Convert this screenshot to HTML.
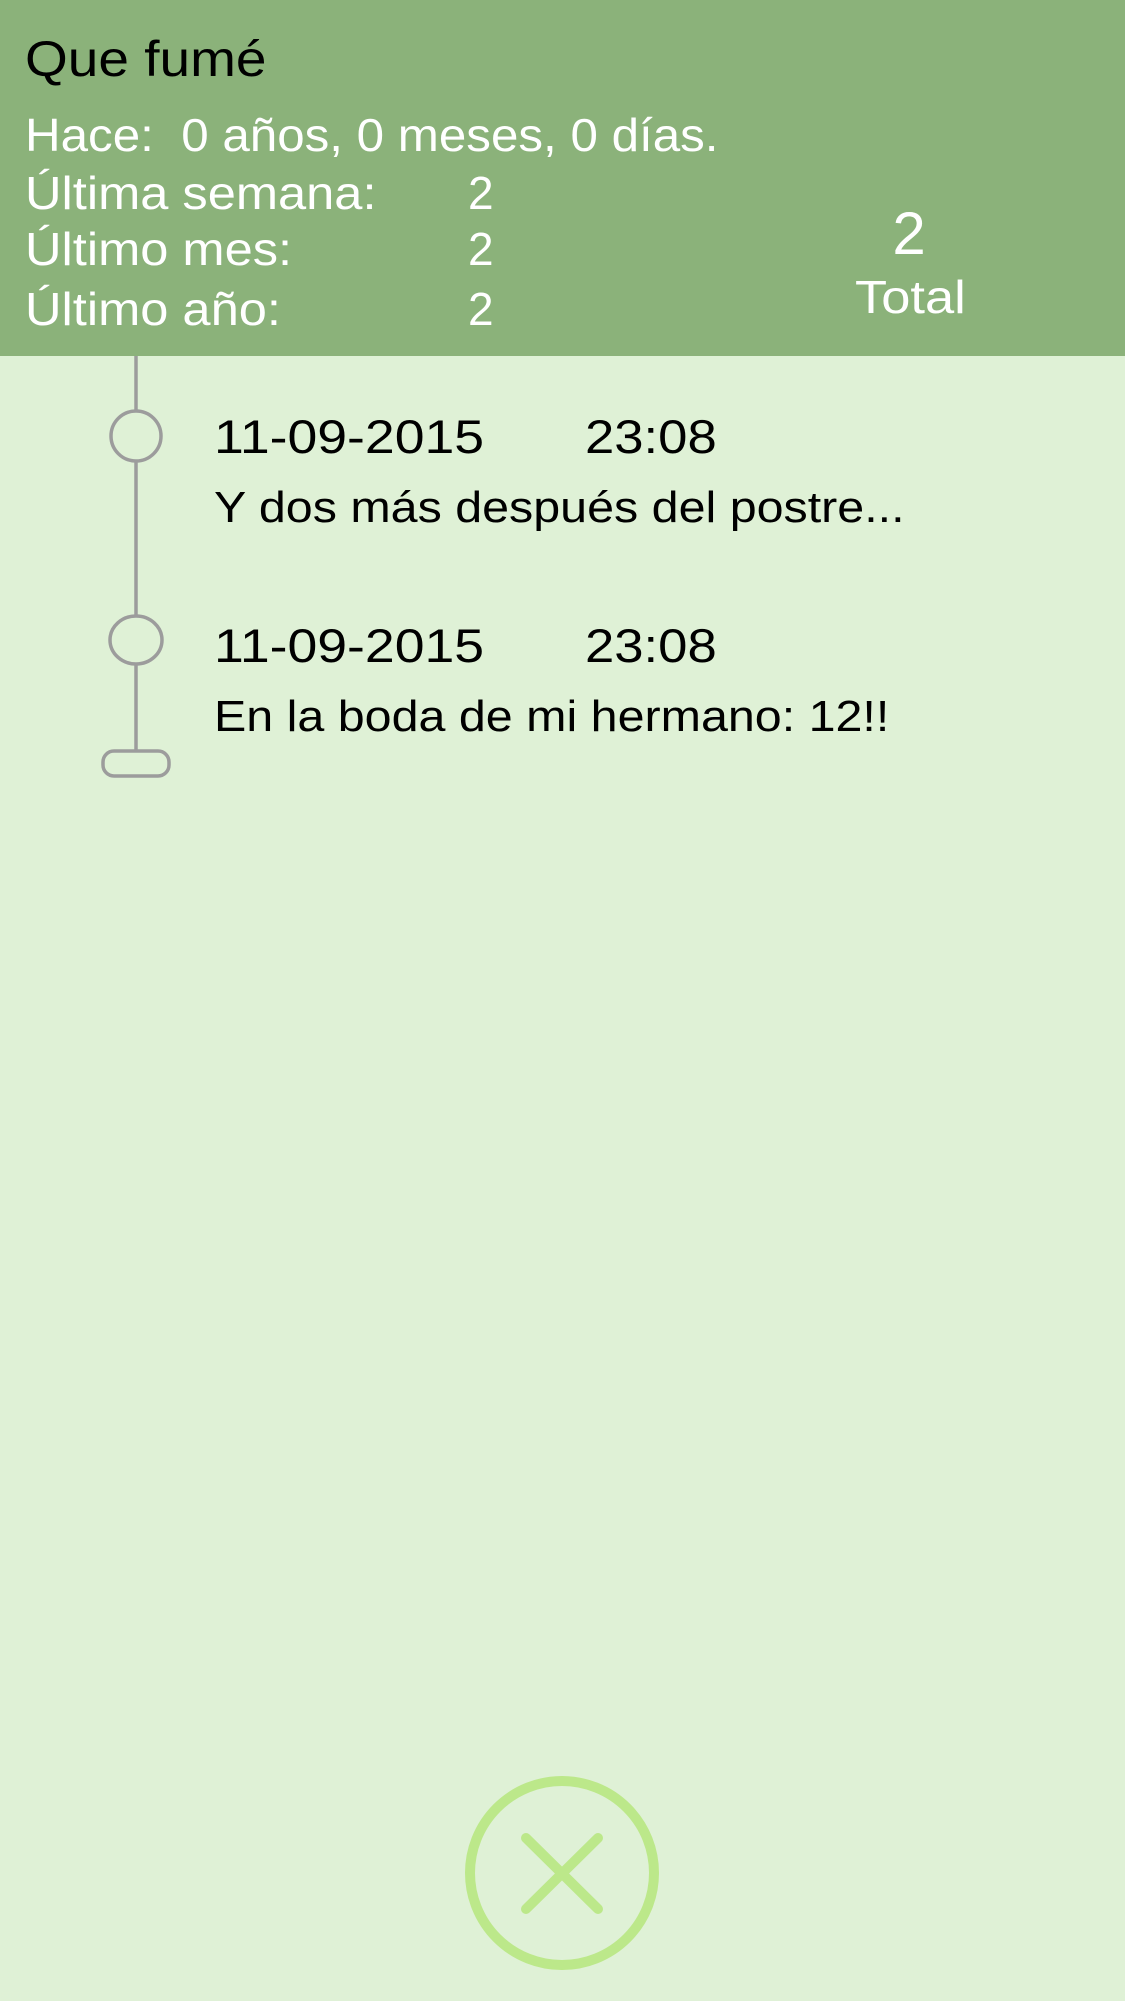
<!DOCTYPE html>
<html><head><meta charset="utf-8"><style>
html,body{margin:0;padding:0}
body{width:1125px;height:2001px;background:#dff1d6;position:relative;overflow:hidden;font-family:"Liberation Sans",sans-serif}
.hdr{position:absolute;left:0;top:0;width:1125px;height:356px;background:#8bb27a}
.t{position:absolute;white-space:nowrap;line-height:1;transform-origin:0 0}
.w{color:#fff}
.s{transform:scaleX(1.1)}
</style></head><body>
<div class="hdr"></div>
<div class="t" style="left:25px;top:34px;font-size:50px;color:#000;transform:scaleX(1.1)">Que fumé</div>
<div class="t w" style="left:25px;top:112px;font-size:46px;transform:scaleX(1.072)">Hace:&nbsp; 0 años, 0 meses, 0 días.</div>
<div class="t w s" style="left:25px;top:170px;font-size:46px">Última semana:</div>
<div class="t w s" style="left:25px;top:226px;font-size:46px">Último mes:</div>
<div class="t w s" style="left:25px;top:286px;font-size:46px">Último año:</div>
<div class="t w" style="left:468px;top:170px;font-size:46px">2</div>
<div class="t w" style="left:468px;top:226px;font-size:46px">2</div>
<div class="t w" style="left:468px;top:286px;font-size:46px">2</div>
<div class="t w" style="left:859px;top:204px;width:100px;text-align:center;font-size:60px">2</div>
<div class="t w" style="left:855px;top:274px;font-size:46px;transform:scaleX(1.14)">Total</div>

<svg style="position:absolute;left:0;top:0" width="1125" height="2001">
<g stroke="#9c9c9c" stroke-width="3.5" fill="none">
<line x1="136" y1="356" x2="136" y2="410"/>
<ellipse cx="136" cy="436" rx="25" ry="25"/>
<line x1="136" y1="461" x2="136" y2="615"/>
<ellipse cx="136" cy="640" rx="26" ry="24"/>
<line x1="136" y1="664" x2="136" y2="751"/>
<rect x="103" y="751" width="66" height="25" rx="11"/>
</g>
<g stroke="#bce88a" stroke-width="10" fill="none" stroke-linecap="round">
<circle cx="562" cy="1873" r="92"/>
<line x1="526" y1="1838" x2="598" y2="1909"/>
<line x1="598" y1="1838" x2="526" y2="1909"/>
</g>
</svg>

<div class="t" style="left:214px;top:413px;font-size:47px;transform:scaleX(1.14)">11-09-2015</div>
<div class="t" style="left:585px;top:413px;font-size:47px;transform:scaleX(1.12)">23:08</div>
<div class="t" style="left:214px;top:486px;font-size:44px;transform:scaleX(1.1)">Y dos más después del postre...</div>
<div class="t" style="left:214px;top:622px;font-size:47px;transform:scaleX(1.14)">11-09-2015</div>
<div class="t" style="left:585px;top:622px;font-size:47px;transform:scaleX(1.12)">23:08</div>
<div class="t" style="left:214px;top:695px;font-size:44px;transform:scaleX(1.1)">En la boda de mi hermano: 12!!</div>
</body></html>
